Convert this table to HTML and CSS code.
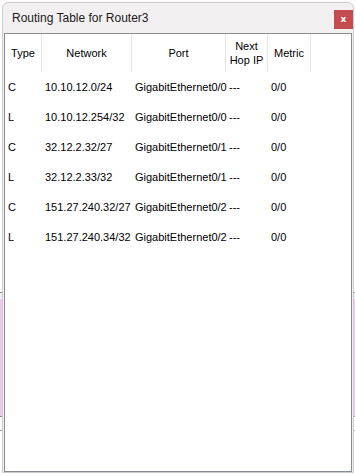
FILE: index.html
```html
<!DOCTYPE html>
<html>
<head>
<meta charset="utf-8">
<link rel="stylesheet" href="styles.css">
</head>
<body>
<div class="window">
  <div class="titlebar">
    <span class="title">Routing Table for Router3</span>
    <span class="close">x</span>
  </div>
  <div class="panel">
    <div class="grid head">
      <div class="hc">Type</div>
      <div class="hc">Network</div>
      <div class="hc">Port</div>
      <div class="hc">Next<br>Hop IP</div>
      <div class="hc">Metric</div>
    </div>
    <div class="grid row"><div class="c first">C</div><div class="c">10.10.12.0/24</div><div class="c">GigabitEthernet0/0</div><div class="c">---</div><div class="c">0/0</div></div>
    <div class="grid row"><div class="c first">L</div><div class="c">10.10.12.254/32</div><div class="c">GigabitEthernet0/0</div><div class="c">---</div><div class="c">0/0</div></div>
    <div class="grid row"><div class="c first">C</div><div class="c">32.12.2.32/27</div><div class="c">GigabitEthernet0/1</div><div class="c">---</div><div class="c">0/0</div></div>
    <div class="grid row"><div class="c first">L</div><div class="c">32.12.2.33/32</div><div class="c">GigabitEthernet0/1</div><div class="c">---</div><div class="c">0/0</div></div>
    <div class="grid row"><div class="c first">C</div><div class="c">151.27.240.32/27</div><div class="c">GigabitEthernet0/2</div><div class="c">---</div><div class="c">0/0</div></div>
    <div class="grid row"><div class="c first">L</div><div class="c">151.27.240.34/32</div><div class="c">GigabitEthernet0/2</div><div class="c">---</div><div class="c">0/0</div></div>
  </div>
</div>
</body>
</html>
```
FILE: styles.css
```css
html, body {
  margin: 0;
  padding: 0;
}
body {
  width: 355px;
  height: 475px;
  overflow: hidden;
  background:
    linear-gradient(to bottom,
      #ffffff 0, #ffffff 292px,
      #8a8a8a 292px, #8a8a8a 293px,
      #eef0f6 293px, #eef0f6 299px,
      #ecc8ec 299px, #ecc8ec 416px,
      #8a8a8a 416px, #8a8a8a 417px,
      #ffffff 417px, #ffffff 430px,
      #9a9a9a 430px, #9a9a9a 431px,
      #ffffff 431px);
  font-family: "Liberation Sans", Arial, sans-serif;
}
.window {
  box-sizing: border-box;
  margin: 2px 0 0 2px;
  width: 352px;
  height: 471px;
  border: 1px solid #cdcdcd;
  border-radius: 6px 6px 0 0;
  background: #f3f0f1;
  display: flex;
  flex-direction: column;
}
.titlebar {
  height: 30px;
  flex: none;
  display: flex;
  justify-content: space-between;
  align-items: center;
  padding-left: 9px;
}
.title {
  font-family: "Liberation Sans", Arial, sans-serif;
  font-size: 12px;
  color: #1a1a1a;
}
.close {
  align-self: flex-start;
  margin-top: 7px;
  width: 19px;
  height: 19px;
  background: #c44b4e;
  color: #fff;
  font-family: "DejaVu Sans", sans-serif;
  font-weight: bold;
  font-size: 9px;
  line-height: 18px;
  text-align: center;
}
.panel {
  flex: 1;
  margin: 0 0 0 1px;
  width: 348px;
  box-sizing: border-box;
  border: 1px solid #868b94;
  background: #fff;
}
.grid {
  display: grid;
  grid-template-columns: 37px 90px 94px 42px 43px;
}
.head {
  height: 38px;
}
.hc {
  border-right: 1px solid #e4e4e4;
  display: flex;
  align-items: center;
  justify-content: center;
  text-align: center;
  font-size: 11px;
  line-height: 14px;
  color: #000;
}
.row {
  height: 30px;
  align-items: center;
}
.c {
  font-size: 11px;
  color: #000;
  padding-left: 3px;
  white-space: nowrap;
}
.c.first {
  padding-left: 3px;
}
```
